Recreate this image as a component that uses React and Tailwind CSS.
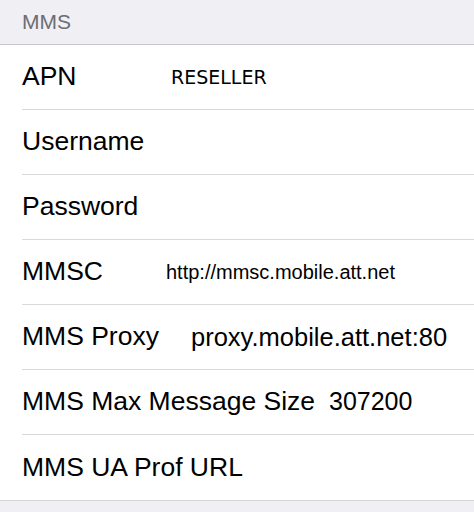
import React from 'react';

const rows = [
  { label: 'APN', value: 'RESELLER', labelW: 'w-[149px]', valueCls: 'text-[19px] font-["DejaVu_Sans",sans-serif]' },
  { label: 'Username' },
  { label: 'Password' },
  { label: 'MMSC', value: 'http://mmsc.mobile.att.net', labelW: 'w-[144px]', valueCls: 'text-[20px]' },
  { label: 'MMS Proxy', value: 'proxy.mobile.att.net:80', labelW: 'w-[169px]', valueCls: 'text-[25.5px]' },
  { label: 'MMS Max Message Size', value: '307200', labelW: 'w-[307px]', valueCls: 'text-[25px]' },
  { label: 'MMS UA Prof URL', last: true },
];

export default function App() {
  return (
    <div className="w-[474px] h-[512px] bg-[#efeff4] overflow-hidden font-['Liberation_Sans',Arial,sans-serif] text-black">
      {/* Section header */}
      <div className="h-[45px] flex items-center pl-[22px] border-b border-[#c8c7cc]">
        <span className="text-[21px] text-[#6d6d72]">MMS</span>
      </div>

      {/* Settings rows */}
      <div className="bg-white border-b border-[#d4d4d8]">
        {rows.map((row, i) => (
          <div
            key={i}
            className={`ml-[22px] h-[65px] flex items-center ${row.last ? '' : 'border-b border-[#d9d9dc]'}`}
          >
            <span className={`text-[26.5px] whitespace-nowrap shrink-0 ${row.labelW || ''}`}>{row.label}</span>
            {row.value && <span className={`whitespace-nowrap ${row.valueCls}`}>{row.value}</span>}
          </div>
        ))}
      </div>
    </div>
  );
}
